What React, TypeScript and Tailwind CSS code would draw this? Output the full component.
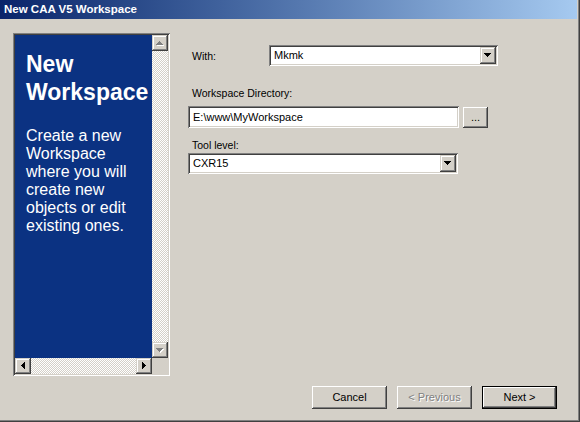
import React from "react";

const raised =
  "shadow-[inset_-1px_-1px_#404040,inset_1px_1px_#fff,inset_-2px_-2px_#808080,inset_2px_2px_#d4d0c8]";
const arrowBtn =
  "shadow-[inset_-1px_-1px_#404040,inset_1px_1px_#d4d0c8,inset_-2px_-2px_#808080,inset_2px_2px_#fff]";
const sunken =
  "shadow-[inset_1px_1px_#808080,inset_-1px_-1px_#fff,inset_2px_2px_#404040,inset_-2px_-2px_#d4d0c8]";
const checker =
  "bg-[image:repeating-conic-gradient(#fff_0_25%,#d4d0c8_0_50%)] bg-[length:2px_2px]";

// little pixel triangles used on the scroll / combo buttons
const shapes = {
  down: "M0 0h7v1H0zM1 1h5v1H1zM2 2h3v1H2zM3 3h1v1H3z",
  up: "M3 0h1v1H3zM2 1h3v1H2zM1 2h5v1H1zM0 3h7v1H0z",
  left: "M3 0h1v7H3zM2 1h1v5H2zM1 2h1v3H1zM0 3h1v1H0z",
  right: "M0 0h1v7H0zM1 1h1v5H1zM2 2h1v3H2zM3 3h1v1H3z",
};

type Dir = keyof typeof shapes;

const Arrow = ({ dir, disabled }: { dir: Dir; disabled?: boolean }) => {
  const vertical = dir === "up" || dir === "down";
  const w = vertical ? 8 : 5;
  const h = vertical ? 5 : 8;
  return (
    <svg width={w} height={h} viewBox={`0 0 ${w} ${h}`} shapeRendering="crispEdges">
      {disabled && <path d={shapes[dir]} fill="#fff" transform="translate(1 1)" />}
      <path d={shapes[dir]} fill={disabled ? "#808080" : "#000"} />
    </svg>
  );
};

const ScrollButton = ({ dir, disabled }: { dir: Dir; disabled?: boolean }) => (
  <div className={`w-[16px] h-[16px] shrink-0 bg-[#d4d0c8] flex items-center justify-center ${arrowBtn}`}>
    <Arrow dir={dir} disabled={disabled} />
  </div>
);

const ComboBox = ({ value, width }: { value: string; width: string }) => (
  <div className={`${width} h-[21px] bg-white p-[2px] flex ${sunken}`}>
    <div className="flex-1 pl-[3px] text-[11px] leading-[17px] text-black">{value}</div>
    <div className={`w-[16px] h-[17px] bg-[#d4d0c8] flex items-center justify-center ${arrowBtn}`}>
      <Arrow dir="down" />
    </div>
  </div>
);

const Button = ({ label, disabled, isDefault }: { label: string; disabled?: boolean; isDefault?: boolean }) => (
  <div className={`w-[75px] h-[23px] ${isDefault ? "border border-black" : ""}`}>
    <div
      className={`w-full h-full bg-[#d4d0c8] flex items-center justify-center text-[11px] ${raised} ${
        disabled ? "text-[#808080] [text-shadow:1px_1px_#fff]" : "text-black"
      }`}
    >
      {label}
    </div>
  </div>
);

const Label = ({ children, className }: { children: React.ReactNode; className?: string }) => (
  <div className={`pl-[4px] text-[10.5px] leading-[14px] text-black ${className ?? ""}`}>{children}</div>
);

export default function App() {
  return (
    <div className="w-[580px] h-[422px] bg-[#d4d0c8] flex flex-col font-['Liberation_Sans',Arial,sans-serif] shadow-[inset_-1px_-1px_#404040,inset_-2px_-2px_#808080] overflow-hidden">
      {/* title bar */}
      <div className="h-[19px] w-[577px] shrink-0 bg-gradient-to-r from-[#0a246a] to-[#a6caf0] flex items-center pl-[4px]">
        <span className="text-white font-bold text-[11.5px]">New CAA V5 Workspace</span>
      </div>

      <div className="h-[367px] shrink-0 flex">
        {/* left info panel */}
        <div
          className={`ml-[13px] mt-[14px] w-[157px] h-[343px] p-[2px] grid grid-cols-[137px_16px] grid-rows-[323px_16px] ${sunken}`}
        >
          <div className="bg-[#0b3282] overflow-hidden pl-[11px] pt-[15px] text-white">
            <div className="font-bold text-[23px] leading-[28px] whitespace-nowrap">
              <div>New</div>
              <div>Workspace</div>
            </div>
            <div className="mt-[21px] text-[16px] leading-[18px] whitespace-nowrap">
              <div>Create a new</div>
              <div>Workspace</div>
              <div>where you will</div>
              <div>create new</div>
              <div>objects or edit</div>
              <div>existing ones.</div>
            </div>
          </div>
          <div className="flex flex-col">
            <ScrollButton dir="up" disabled />
            <div className={`flex-1 ${checker}`} />
            <ScrollButton dir="down" disabled />
          </div>
          <div className="flex">
            <ScrollButton dir="left" />
            <div className={`flex-1 ${checker}`} />
            <ScrollButton dir="right" />
          </div>
          <div className="bg-[#d4d0c8]" />
        </div>

        {/* form */}
        <div className="ml-[18px] mt-[26px] flex flex-col">
          <div className="h-[21px] flex items-center">
            <Label className="w-[81px]">With:</Label>
            <ComboBox value="Mkmk" width="w-[229px]" />
          </div>

          <Label className="mt-[20px]">Workspace Directory:</Label>
          <div className="mt-[6px] flex items-start gap-[4px]">
            <div className={`w-[271px] h-[22px] bg-white p-[2px] ${sunken}`}>
              <div className="pl-[3px] text-[11px] leading-[18px] text-black">E:\www\MyWorkspace</div>
            </div>
            <div
              className={`mt-[1px] w-[25px] h-[21px] bg-[#d4d0c8] flex items-center justify-center text-[11px] leading-none pb-[1px] ${raised}`}
            >
              ...
            </div>
          </div>

          <Label className="mt-[10px]">Tool level:</Label>
          <div className="mt-[1px]">
            <ComboBox value="CXR15" width="w-[270px]" />
          </div>
        </div>
      </div>

      {/* buttons */}
      <div className="flex justify-end gap-[10px] pr-[23px]">
        <Button label="Cancel" />
        <Button label="< Previous" disabled />
        <Button label="Next >" isDefault />
      </div>
    </div>
  );
}
